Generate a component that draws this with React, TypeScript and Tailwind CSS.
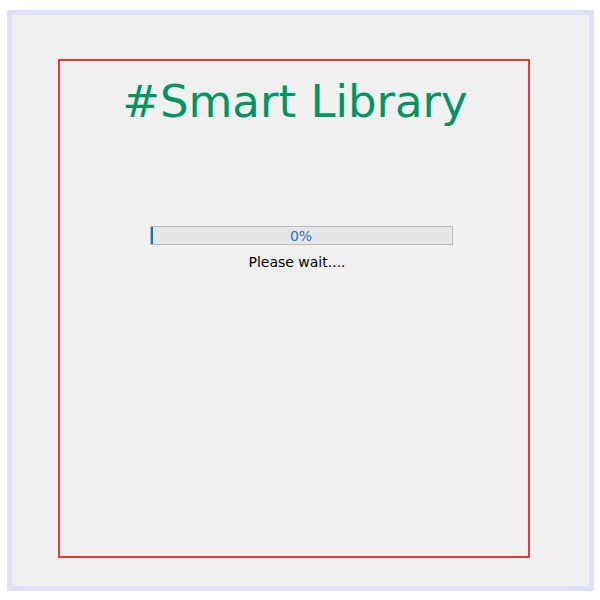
export default function App() {
  return (
    <div className="w-[600px] h-[600px] bg-white pt-[10px] pl-[7px]">
      <div className="w-[587px] h-[581px] border-[5px] border-[#dfdff9] bg-[#f0f0f0] pt-[44px] pl-[46px]">
        <div className="w-[472px] h-[499px] border-[2px] border-[#e23a3e] flex flex-col items-center" style={{ fontFamily: '"DejaVu Sans", Verdana, sans-serif' }}>
          <div className="mt-[13px] ml-[2px] text-[45px] leading-[56px] text-[#009463]">#Smart Library</div>
          <div className="mt-[96px] ml-[14px] relative w-[303px] h-[19px] border border-[#bcbcbc] bg-[#e6e6e6] flex items-center justify-center">
            <div className="absolute left-0 top-0 h-full w-[2px] bg-[#0a74cc]" />
            <span className="text-[14px] text-[#1e73c8] leading-none">0%</span>
          </div>
          <div className="mt-[9px] ml-[6px] text-[14px] leading-[17px] text-black">Please wait....</div>
        </div>
      </div>
    </div>
  );
}
